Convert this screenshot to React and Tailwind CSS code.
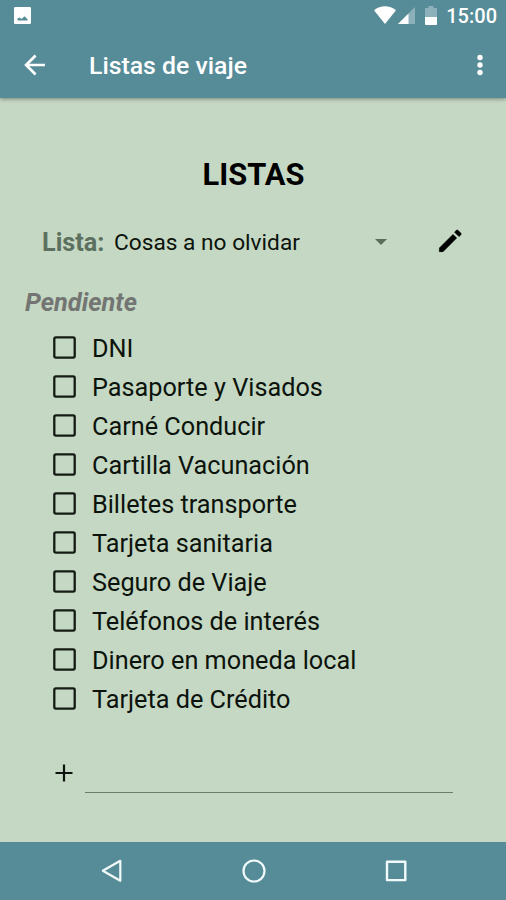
import { useState } from "react";

const ITEMS = [
  "DNI",
  "Pasaporte y Visados",
  "Carné Conducir",
  "Cartilla Vacunación",
  "Billetes transporte",
  "Tarjeta sanitaria",
  "Seguro de Viaje",
  "Teléfonos de interés",
  "Dinero en moneda local",
  "Tarjeta de Crédito",
];

const StatusBar = () => (
  <div className="flex h-8 items-center pl-[14px] pr-[9px]">
    <svg className="h-[17px] w-[17px] -mt-[2px]" viewBox="0 0 17 17">
      <rect width="17" height="17" rx="1.2" fill="#fff" />
      <path d="M3.5 13.5 V11.5 L5.5 10.5 L7.6 12 L10.4 9.2 L13.5 12 V13.5 Z" fill="#568c98" />
    </svg>
    <div className="ml-auto flex items-center">
      <svg className="h-[18px] w-[22px] -mt-[2px]" viewBox="0 0 22 18">
        <path d="M11 18 L0 4.2 C6.5 -1.2 15.5 -1.2 22 4.2 Z" fill="#fff" />
      </svg>
      <svg className="ml-[2px] h-[17px] w-[17px] -mt-px" viewBox="0 0 17 17">
        <path d="M17 0 V17 H0 Z" fill="#8db1ba" />
        <path d="M10.5 6.5 V17 H0 Z" fill="#fff" />
      </svg>
      <svg className="ml-[10px] h-[19px] w-[12px] -mt-[2px]" viewBox="0 0 12 19">
        <path d="M3.5 0 H8.5 V2 H12 V19 H0 V2 H3.5 Z" fill="#8db1ba" />
        <path d="M0 11 H12 V18 a1 1 0 0 1 -1 1 H1 a1 1 0 0 1 -1 -1 Z" fill="#fff" />
      </svg>
      <span className="ml-[9px] text-[20px] leading-8 font-medium">15:00</span>
    </div>
  </div>
);

const AppBar = () => (
  <div className="flex h-[66px] items-center pl-[18px] pr-[9px]">
    <svg className="h-[34px] w-[34px] -mt-px" viewBox="0 0 24 24" fill="none" stroke="#fff" strokeWidth="1.9">
      <path d="M19 12 H6.3 M12.4 5.3 L5.7 12 L12.4 18.7" />
    </svg>
    <h1 className="mt-[2px] ml-[37px] text-[24.8px] font-medium">Listas de viaje</h1>
    <svg className="ml-auto h-[34px] w-[34px] -mt-px" viewBox="0 0 24 24" fill="#fff">
      <circle cx="12" cy="6.7" r="1.9" />
      <circle cx="12" cy="12" r="1.9" />
      <circle cx="12" cy="17.3" r="1.9" />
    </svg>
  </div>
);

const Checkbox = ({ checked }) => (
  <svg className="mb-[3px] h-[23px] w-[23px]" viewBox="0 0 23 23" fill="none" stroke="#141b14" strokeWidth="2.3">
    <rect x="1.3" y="1.3" width="20.4" height="20.4" rx="1.6" />
    {checked && <path d="M6 11.5 L10 15.5 L17.5 7.5" />}
  </svg>
);

const NavBar = () => (
  <nav className="flex h-[58px] items-center justify-between bg-[#568c98] pl-[100px] pr-[98px]">
    <svg className="h-6 w-6" viewBox="0 0 24 24" fill="none" stroke="#f2fafc" strokeWidth="2.2" strokeLinejoin="round">
      <path d="M20.3 1.8 V21.8 L2.8 11.8 Z" />
    </svg>
    <svg className="h-6 w-6" viewBox="0 0 24 24" fill="none" stroke="#f2fafc" strokeWidth="2.2">
      <circle cx="12" cy="12" r="10.5" />
    </svg>
    <svg className="h-6 w-6" viewBox="0 0 24 24" fill="none" stroke="#f2fafc" strokeWidth="2.4" strokeLinejoin="round">
      <rect x="3" y="2.8" width="18.3" height="18.3" />
    </svg>
  </nav>
);

const App = () => {
  const [checked, setChecked] = useState([]);

  const toggle = (item) => {
    setChecked((prev) => (prev.includes(item) ? prev.filter((i) => i !== item) : [...prev, item]));
  };

  return (
    <div className="flex h-[900px] w-[506px] flex-col overflow-hidden bg-[#c5d8c3] font-[Roboto,sans-serif] text-black">
      <header className="relative bg-[#568c98] text-white shadow-[0_1px_4px_rgba(0,0,0,0.4)]">
        <StatusBar />
        <AppBar />
      </header>

      <main className="flex-1">
        <h2 className="mt-[57px] pl-px text-center text-[30.8px] leading-10 font-bold">LISTAS</h2>

        {/* List selector */}
        <div className="mt-7 flex h-10 items-center pl-[42px] pr-[41px]">
          <span className="w-[72px] text-[25.2px] font-bold text-[#5c7060]">Lista:</span>
          <span className="text-[22.7px] text-[#0c130c]">Cosas a no olvidar</span>
          <svg className="ml-auto h-[6px] w-[12px] -mt-[3px]" viewBox="0 0 12 6">
            <path d="M0 0 H12 L6 6 Z" fill="#5a6f5b" />
          </svg>
          <svg className="ml-[48px] h-[30px] w-[30px] -mt-[4px]" viewBox="0 0 24 24">
            <path
              d="M3.5 17.6V20.5h2.9L17.3 9.6l-2.9-2.9L3.5 17.6zM20.6 7.1a1 1 0 0 0 0-1.41l-2.2-2.2a1 1 0 0 0-1.41 0l-1.3 1.5 3.5 3.5 1.41-1.39z"
              stroke="#000"
              strokeWidth="0.5"
              strokeLinejoin="round"
            />
          </svg>
        </div>

        <h3 className="mt-[24px] pl-[25px] text-[25.4px] leading-[30px] font-bold text-[#737573] italic">Pendiente</h3>

        <ul className="mt-[12px] pl-[53px]">
          {ITEMS.map((item) => (
            <li key={item} className="flex h-[39px] cursor-pointer items-center" onClick={() => toggle(item)}>
              <Checkbox checked={checked.includes(item)} />
              <span className="mt-px ml-4 text-[25.25px] text-[#0c130c]">{item}</span>
            </li>
          ))}
        </ul>

        {/* New item */}
        <div className="mt-[34px] flex h-[40px] pl-[55px]">
          <svg className="mt-[11px] h-[18px] w-[18px]" viewBox="0 0 18 18" stroke="#0c130c" strokeWidth="2.2">
            <path d="M9 0.5 V17.5 M0.5 9 H17.5" />
          </svg>
          <input className="ml-[12px] w-[368px] border-b border-[#6d7c6d] bg-transparent text-[25px] outline-none" />
        </div>
      </main>

      <NavBar />
    </div>
  );
};

export default App;
